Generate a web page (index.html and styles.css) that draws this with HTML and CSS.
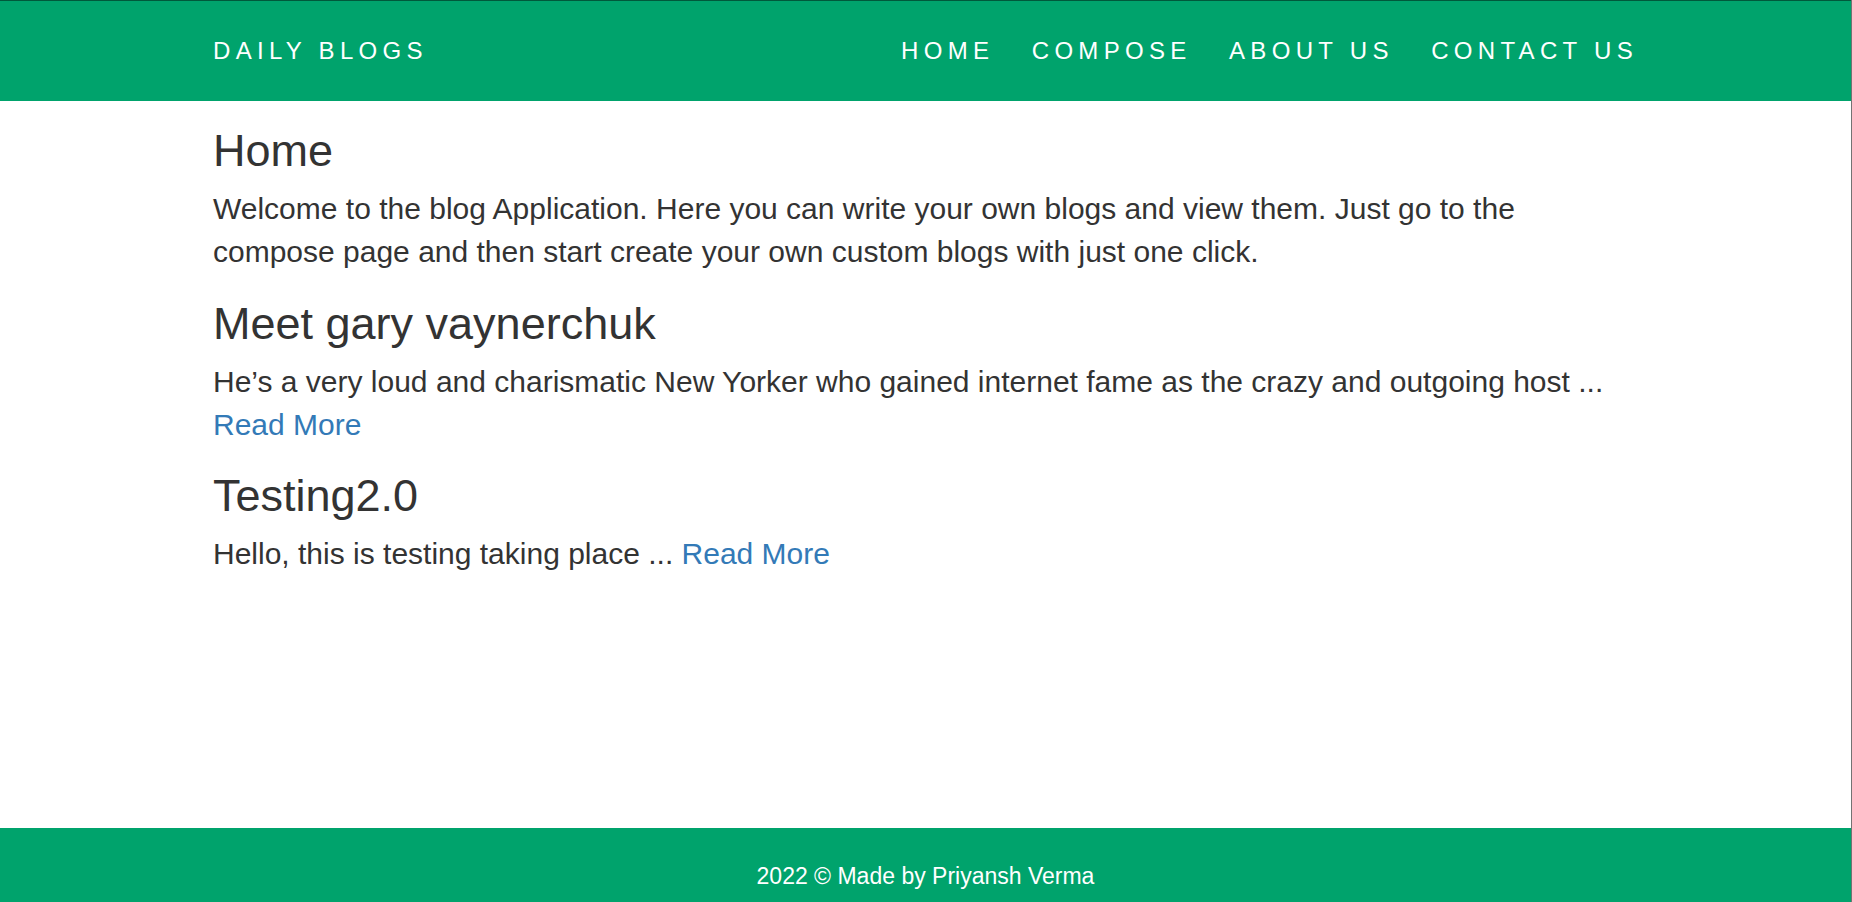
FILE: index.html
```html
<!DOCTYPE html>
<html lang="en">
<head>
<meta charset="utf-8">
<title>Daily Blogs</title>
<link rel="stylesheet" href="styles.css">
</head>
<body>
<div class="page">
  <header class="navbar">
    <div class="container navbar-inner">
      <a class="brand" href="#">Daily Blogs</a>
      <ul class="nav">
        <li><a href="#">Home</a></li>
        <li><a href="#">Compose</a></li>
        <li><a href="#">About Us</a></li>
        <li><a href="#">Contact Us</a></li>
      </ul>
    </div>
  </header>

  <main class="container content">
    <h1>Home</h1>
    <p>Welcome to the blog Application. Here you can write your own blogs and view them. Just go to the compose page and then start create your own custom blogs with just one click.</p>

    <h1>Meet gary vaynerchuk</h1>
    <p>He’s a very loud and charismatic New Yorker who gained internet fame as the crazy and outgoing host ... <a href="#">Read More</a></p>

    <h1>Testing2.0</h1>
    <p>Hello, this is testing taking place ... <a href="#">Read More</a></p>
  </main>

  <footer class="footer">
    <p class="footer-text">2022 © Made by Priyansh Verma</p>
  </footer>
</div>
</body>
</html>
```

FILE: styles.css
```css
* {
  box-sizing: border-box;
}

html, body {
  margin: 0;
  padding: 0;
}

body {
  font-family: "Liberation Sans", Arial, Helvetica, sans-serif;
  color: #333333;
  background: #ffffff;
}

.page {
  display: flex;
  flex-direction: column;
  min-height: 100vh;
  border-right: 1px solid rgba(0, 0, 0, 0.55);
}

.container {
  width: 1462.5px;
  margin: 0 auto;
  padding: 0 18.75px;
}

.navbar {
  background: #00a36c;
  border-top: 1px solid rgba(0, 0, 0, 0.45);
  height: 101px;
}

.navbar-inner {
  height: 100%;
  display: flex;
  align-items: center;
  justify-content: space-between;
}

.brand,
.nav a {
  color: #ffffff;
  text-decoration: none;
  text-transform: uppercase;
  font-size: 24px;
  letter-spacing: 5.3px;
  line-height: 30px;
}

.nav {
  display: flex;
  list-style: none;
  margin: 0 -18.75px 0 0;
  padding: 0;
}

.nav a {
  display: block;
  padding: 0 18.75px;
}

.content {
  flex: 1;
}

.content h1 {
  font-size: 45px;
  font-weight: 500;
  line-height: 1.1;
  margin: 25px 0 12.5px;
  color: #333333;
}

.content p {
  font-size: 30px;
  line-height: 1.42857;
  margin: 0 0 12.5px;
}

.content a {
  color: #337ab7;
  text-decoration: none;
}

.footer {
  background: #00a36c;
  height: 74px;
  padding-top: 32px;
}

.footer-text {
  margin: 0;
  color: #ffffff;
  text-align: center;
  font-size: 23px;
  line-height: 32px;
}
```
